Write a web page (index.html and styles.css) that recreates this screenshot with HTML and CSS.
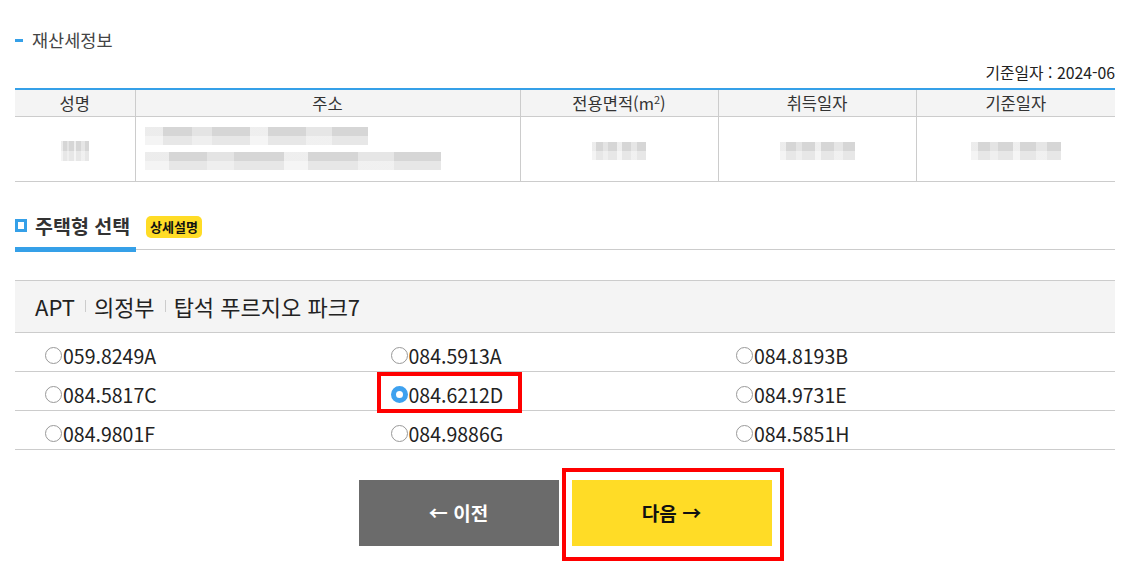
FILE: index.html
```html
<!DOCTYPE html>
<html lang="ko">
<head>
  <meta charset="UTF-8">
  <meta name="viewport" content="width=device-width, initial-scale=1.0">
  <title>주택형 선택</title>
  <link rel="stylesheet" href="styles.css">
</head>
<body>
  <div class="wrap">
    <h3 class="sub-title"><span class="dash"></span>재산세정보</h3>
    <p class="base-date">기준일자 : 2024-06</p>
    <table class="tax-table">
      <colgroup>
        <col style="width: 120px">
        <col style="width: 385px">
        <col style="width: 198px">
        <col style="width: 198px">
        <col>
      </colgroup>
      <thead>
        <tr>
          <th>성명</th>
          <th>주소</th>
          <th>전용면적(m<sup>2</sup>)</th>
          <th>취득일자</th>
          <th>기준일자</th>
        </tr>
      </thead>
      <tbody>
        <tr>
          <td><span class="mosaic m-name"></span></td>
          <td class="addr">
            <span class="mosaic m-addr1"></span>
            <span class="mosaic m-addr2"></span>
          </td>
          <td><span class="mosaic m-area"></span></td>
          <td><span class="mosaic m-date1"></span></td>
          <td><span class="mosaic m-date2"></span></td>
        </tr>
      </tbody>
    </table>

    <div class="sec-head">
      <h3 class="sec-title"><span class="sq"></span>주택형 선택</h3>
      <span class="badge">상세설명</span>
    </div>

    <div class="apt-box">APT<i class="sep"></i>의정부<i class="sep"></i>탑석 푸르지오 파크7</div>

    <form class="type-list" name="houseType">
      <div class="type-row">
        <label class="type-item"><input class="radio" type="radio" name="type">059.8249A</label>
        <label class="type-item"><input class="radio" type="radio" name="type">084.5913A</label>
        <label class="type-item"><input class="radio" type="radio" name="type">084.8193B</label>
      </div>
      <div class="type-row">
        <label class="type-item"><input class="radio" type="radio" name="type">084.5817C</label>
        <label class="type-item mark-radio"><input class="radio" type="radio" name="type" checked>084.6212D</label>
        <label class="type-item"><input class="radio" type="radio" name="type">084.9731E</label>
      </div>
      <div class="type-row">
        <label class="type-item"><input class="radio" type="radio" name="type">084.9801F</label>
        <label class="type-item"><input class="radio" type="radio" name="type">084.9886G</label>
        <label class="type-item"><input class="radio" type="radio" name="type">084.5851H</label>
      </div>
    </form>

    <div class="btns">
      <button class="btn prev" type="button">← 이전</button>
      <button class="btn next mark-btn" type="button">다음 →</button>
    </div>
  </div>
</body>
</html>
```

FILE: styles.css
```css
* {
  margin: 0;
  padding: 0;
  box-sizing: border-box;
}

html, body {
  height: 100%;
}

body {
  font-family: "Noto Sans CJK KR", "Noto Sans", sans-serif;
  color: #333;
  background: #fff;
}

.wrap {
  width: 1100px;
  margin-left: 15px;
  padding: 28px 0 40px;
}

.sub-title {
  display: flex;
  align-items: center;
  font-size: 17.5px;
  font-weight: normal;
  line-height: 24px;
  color: #444;
}

.dash {
  width: 8px;
  height: 3px;
  margin-right: 9px;
  background-color: #35a0e8;
}

.base-date {
  margin-top: 11px;
  font-size: 15.8px;
  line-height: 20px;
  text-align: right;
  color: #222;
}

.tax-table {
  width: 100%;
  margin-top: 5px;
  border-collapse: collapse;
  border-top: 2px solid #35a0e8;
  table-layout: fixed;
}

.tax-table th {
  height: 27px;
  font-size: 16.5px;
  font-weight: normal;
  color: #333;
  background-color: #f4f4f4;
  border-bottom: 1px solid #ccc;
  border-left: 1px solid #ccc;
}

.tax-table td {
  height: 65px;
  text-align: center;
  border-bottom: 1px solid #ccc;
  border-left: 1px solid #ccc;
}

.tax-table th:first-child,
.tax-table td:first-child {
  border-left: 0;
}

.tax-table sup {
  font-size: 11px;
  vertical-align: 6px;
}

.tax-table td.addr {
  text-align: left;
  padding-left: 9px;
}

.mosaic {
  display: inline-block;
  vertical-align: middle;
  background:
    linear-gradient(90deg, rgba(255,255,255,.55) 0 8%, transparent 8% 21%, rgba(255,255,255,.35) 21% 30%, transparent 30% 47%, rgba(255,255,255,.6) 47% 55%, transparent 55% 72%, rgba(255,255,255,.4) 72% 84%, transparent 84%),
    linear-gradient(#d6d6d6 0 50%, #e7e7e7 50%);
}

.m-name { width: 28px; height: 20px; }
.m-addr1 { display: block; width: 223px; height: 18px; margin-bottom: 7px; }
.m-addr2 { display: block; width: 296px; height: 18px; }
.m-area { width: 54px; height: 18px; }
.m-date1 { width: 75px; height: 18px; }
.m-date2 { width: 90px; height: 18px; }

.sec-head {
  display: flex;
  align-items: flex-start;
  margin-top: 30px;
  border-bottom: 1px solid #ccc;
}

.sec-title {
  display: flex;
  align-items: center;
  width: 121px;
  margin-bottom: -3px;
  padding-bottom: 7px;
  font-size: 19.5px;
  line-height: 28px;
  color: #333;
  border-bottom: 5px solid #35a0e8;
}

.sq {
  width: 12px;
  height: 13px;
  margin-right: 8px;
  border: 3px solid #35a0e8;
}

.badge {
  margin: 4px 0 0 10px;
  padding: 0 4px;
  height: 22px;
  line-height: 22px;
  font-size: 13px;
  font-weight: bold;
  color: #111;
  background-color: #ffdc26;
  border-radius: 5px;
}

.apt-box {
  display: flex;
  align-items: center;
  height: 53px;
  margin-top: 30px;
  padding-left: 20px;
  font-size: 22px;
  color: #222;
  background-color: #f4f4f4;
  border-top: 1px solid #ccc;
  border-bottom: 1px solid #ccc;
}

.sep {
  width: 1px;
  height: 12px;
  margin: 0 8px 0 10px;
  background-color: #ccc;
}

.type-row {
  display: grid;
  grid-template-columns: repeat(3, 345.5px);
  height: 39px;
  padding-left: 30px;
  border-bottom: 1px solid #ccc;
}

.type-item {
  display: flex;
  align-items: center;
  justify-self: start;
  height: 38px;
  padding-top: 7px;
  font-size: 19.5px;
  color: #222;
  cursor: pointer;
}

.radio {
  appearance: none;
  width: 17px;
  height: 17px;
  margin-right: 1px;
  border: 1px solid #999;
  border-radius: 50%;
  background-color: #fff;
}

.radio:checked {
  border: 5px solid #3ea1ef;
}

.mark-radio {
  position: relative;
}

.mark-radio::after {
  content: '';
  position: absolute;
  top: 0;
  bottom: -3px;
  left: -14px;
  right: -19px;
  border: 4px solid #f00;
}

.btns {
  display: flex;
  justify-content: center;
  gap: 13px;
  margin-top: 30px;
}

.btn {
  width: 200px;
  height: 66px;
  font-family: inherit;
  font-size: 19px;
  font-weight: bold;
  border: 0;
  cursor: pointer;
}

.prev {
  color: #fff;
  background-color: #6b6b6b;
}

.next {
  color: #111;
  background-color: #ffdc26;
}

.mark-btn {
  position: relative;
}

.mark-btn::after {
  content: '';
  position: absolute;
  top: -12px;
  bottom: -15px;
  left: -10px;
  right: -12px;
  border: 4px solid #f00;
}
```
